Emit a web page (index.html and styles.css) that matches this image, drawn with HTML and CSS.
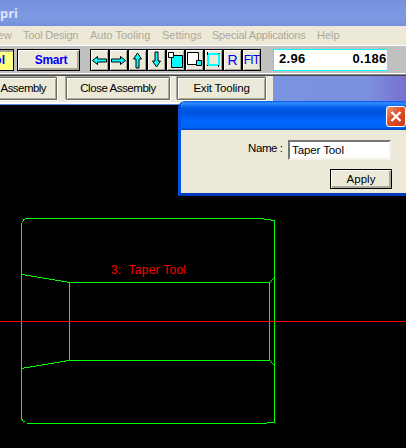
FILE: index.html
```
<!DOCTYPE html>
<html lang="en">
<head>
<meta charset="utf-8">
<title>pri</title>
<link rel="stylesheet" href="styles.css">
</head>
<body>
<div class="app">
  <header class="titlebar">pri</header>
  <nav class="menu">
    <span class="m-view">View</span><span class="m-design">Tool Design</span><span class="m-auto">Auto Tooling</span><span class="m-settings">Settings</span><span class="m-special">Special Applications</span><span class="m-help">Help</span>
  </nav>
  <div class="toolbar">
    <button class="mode mode-tool">Tool</button>
    <button class="mode mode-smart">Smart</button>
    <div class="icons">
      <svg viewBox="1 1 17 20"><path class="cy" d="M2.500 11.500l5-4v2.500h9v3h-9v2.500z"/></svg>
      <svg viewBox="1 1 17 20"><path class="cy" d="M16.500 11.500l-5-4v2.500h-9v3h9v2.500z"/></svg>
      <svg viewBox="1 1 17 20"><path class="cy" d="M9.500 4l-4 6h2.500v9h3v-9h2.500z"/></svg>
      <svg viewBox="1 1 17 20"><path class="cy" d="M9.500 18l-4-6h2.500v-9h3v9h2.500z"/></svg>
      <svg viewBox="1 1 17 20"><path class="cy" d="M5.500 6.500h11v12h-11z"/><path class="wh" d="M2.500 3.500h5v5h-5z"/></svg>
      <svg viewBox="1 1 17 20"><path class="wh" d="M2.500 3.500h11v12h-11z"/><path class="cy" d="M11.500 11.500h5v5h-5z"/></svg>
      <svg viewBox="1 1 17 20"><path class="frame" d="M4 5h11v11H4z"/><path class="line" d="M3.500 3v3M14.500 16v2M15.500 4.500h-1M3 16.500h1"/></svg>
      <span class="letter">R</span>
      <span class="letter fit">FIT</span>
    </div>
    <div class="readout"><span>2.96</span><span class="second">0.186</span></div>
  </div>
  <div class="actions">
    <button class="act act-1">Assembly</button>
    <button class="act act-2">Close Assembly</button>
    <button class="act act-3">Exit Tooling</button>
    <div class="desk"></div>
  </div>
  <svg class="drawing" viewBox="0 105 406 343">
    <g class="green">
      <path d="M25 218.500H264M264 219.500H271M271 220.500H275M274.500 220V422M275 422.500H267M267 423.500H27M25 421.500H23M22.500 421V419M21.500 420V223M22.500 222V221M23.500 221V219M23 219.500H25"/>
      <path d="M22 274.500h3m0 1h6m0 1h6m0 1h6m0 1h6m0 1h6m0 1h6m0 1h6m0 1h203M69.500 282V361"/>
      <path d="M22 368.500h2m0-1h6m0-1h6m0-1h6m0-1h6m0-1h6m0-1h6m0-1h6m0-1h204M269.500 282V361"/>
      <path d="M270 281.500h1m0-1h1m0-1h1m0-1h1M270 361.500h1m0 1h1m0 1h1m0 1h1"/>
    </g>
    <path class="axis" d="M0 321.500H406"/>
    <text class="label" x="111" y="274" textLength="75" xml:space="preserve">3:  Taper Tool</text>
  </svg>
  <section class="dialog">
    <div class="caption"><button class="close" aria-label="Close"><svg viewBox="0 0 18 19"><path d="M4.500 5l9 9M13.500 5l-9 9"/></svg></button></div>
    <div class="form">
      <div class="row"><label>Name :</label><div class="field">Taper Tool</div></div>
      <button class="apply">Apply</button>
    </div>
  </section>
</div>
</body>
</html>
```
FILE: styles.css
```
* { box-sizing: border-box; }
body { margin: 0; background: #000; font: 12px "Liberation Sans", Arial, sans-serif; }
button { font: inherit; padding: 0; border-radius: 0; white-space: nowrap; flex: none; color: #000; }
.app { position: relative; width: 406px; height: 448px; overflow: hidden; display: flex; flex-direction: column; }
.titlebar { height: 26px; flex: none; background: linear-gradient(#7690dc, #7c98e2 12px, #7c98e0 20px, #7590d8); color: #dce5f8; font: bold 13px/26px "Noto Sans", sans-serif; }
.menu { height: 19px; flex: none; display: flex; background: #ece9d8; color: #aca899; font: 11px/18px "Liberation Sans", sans-serif; white-space: nowrap; }
.m-view { width: 23px; margin-left: -12px; margin-right: 12px; }
.m-design { width: 67px; letter-spacing: -.2px; }
.m-auto { width: 72px; }
.m-settings { width: 50px; }
.m-special { width: 105px; letter-spacing: -.22px; }
.toolbar { height: 31px; flex: none; display: flex; align-items: flex-start; background: #c0c0c0; padding-top: 3px; border-top: 1px solid #fff; border-bottom: 1px solid #444; box-shadow: inset 0 -1px #888, inset 0 -2px #fff; }
.mode { height: 22px; border: 1px solid #000; background: #ece9d8; box-shadow: inset 1px 1px #fff, inset -2px -2px #aca899; color: #00f; font: bold 12px/17px "Liberation Sans", sans-serif; }
.mode-tool { width: 40px; margin-left: -26px; margin-right: 3px; text-align: right; padding-right: 8px; background: #ffff80; box-shadow: inset 0 2px #aca899; }
.mode-smart { width: 63px; margin-right: 10px; padding-left: 5px; letter-spacing: -.3px; }
.icons { display: flex; width: 171px; margin-right: 12px; }
.icons > * { width: 19px; height: 22px; flex: none; border: 1px solid #000; background: #ece9d8; box-shadow: inset 1px 1px #fff, inset -1px -1px #aca899; }
.icons svg { overflow: hidden; }
.cy { fill: #0ff; stroke: #000; }
.wh { fill: #fff; stroke: #000; }
.frame { fill: none; stroke: #0ff; stroke-width: 2; }
.line { fill: none; stroke: #000; }
.letter { color: #00f; font-size: 14px; line-height: 20px; text-align: center; }
.fit { font-size: 12px; letter-spacing: -.8px; }
.readout { width: 114px; height: 22px; overflow: hidden; display: flex; background: #fff; border: 1px solid #0ff; border-right: 0; font: bold 13px/18px "Liberation Sans", sans-serif; padding-left: 5px; letter-spacing: .3px; white-space: nowrap; }
.second { margin-left: 47px; }
.actions { height: 29px; flex: none; display: flex; align-items: flex-start; padding-top: 1px; background: linear-gradient(#ece9d8 26px, #fff 26px, #fff 28px, #5a88e8 28px, #5a88e8 29px); }
.act { height: 23px; background: #ece9d8; border: 1px solid #716f64; box-shadow: inset 1px 1px #fff, inset -1px -1px #aca899, 1px 1px #fff, -1px -1px #aca899; font-size: 11.5px; line-height: 21px; letter-spacing: -.45px; }
.act-1 { width: 66px; margin-left: -9px; margin-right: 9px; padding-right: 0; text-align: right; padding-right: 10px; letter-spacing: -.55px; }
.act-2 { width: 104px; margin-right: 7px; }
.act-3 { width: 89px; margin-right: 7px; letter-spacing: -.2px; }
.desk { flex: 1; height: 25px; margin-top: -1px; background: linear-gradient(90deg, #7b94df, #7b92df 70%, #796fd0); }
.drawing { width: 406px; height: 343px; flex: none; display: block; shape-rendering: crispEdges; }
.green { fill: none; stroke: #0f0; }
.axis { stroke: #f00; }
.label { fill: #f00; font: 12px "Liberation Sans", sans-serif; white-space: pre; }
.dialog { position: absolute; left: 178px; top: 101px; width: 232px; height: 95px; border: 3px solid #0051e0; border-top: 0; border-bottom-color: #0038c0; border-radius: 7px 0 0; overflow: hidden; background: #ece9d8; }
.caption { height: 29px; margin: 0 -3px; display: flex; padding: 5px 0 0 208px; background: linear-gradient(#0058e6, #318cff 2px, #005be8 7px, #0053e0 12px, #0065ff 20px, #0064f8 26px, #0042c0); }
.close { width: 20px; height: 21px; border: 1px solid #fff; border-radius: 3px; background: linear-gradient(135deg, #f09878, #e0502b 45%, #c83818); }
.close svg { display: block; width: 18px; height: 19px; }
.close path { stroke: #fff; stroke-width: 2.300; }
.form { height: 63px; padding: 10px 15px 0 67px; }
.row { display: flex; font-size: 11.5px; line-height: 16px; letter-spacing: -.4px; }
.row label { width: 40px; white-space: nowrap; }
.field { width: 103px; height: 20px; flex: none; background: #fff; border: 2px solid; border-color: #777 #f5f3ea #f5f3ea #777; padding-left: 2px; letter-spacing: -.1px; }
.apply { display: block; width: 62px; height: 20px; margin: 9px 0 0 82px; border: 1px solid #000; background: #ece9d8; box-shadow: inset 1px 1px #fff, inset -2px -2px #aca899; font-size: 11.5px; line-height: 17px; }
```
